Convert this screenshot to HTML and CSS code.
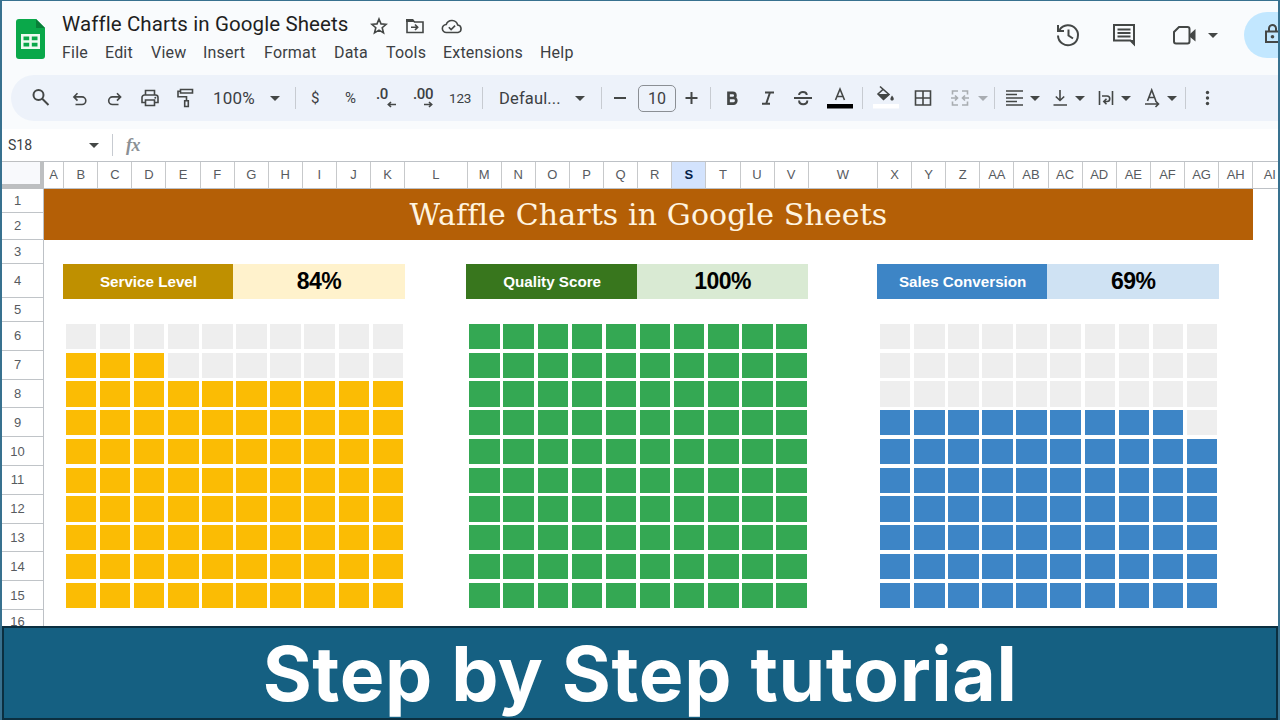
FILE: index.html
```
<!DOCTYPE html>
<html lang="en">
<head>
  <meta charset="UTF-8">
  <meta name="viewport" content="width=device-width, initial-scale=1">
  <title>Waffle Charts in Google Sheets</title>
  <link rel="stylesheet" href="styles.css">
</head>
<body>
  <div class="app">
    <header class="top">
      <svg class="logo" width="30" height="40" viewBox="0 0 30 40">
        <path fill="#0aa84a" d="M3 0h17l9 9v28a3 3 0 0 1-3 3H3a3 3 0 0 1-3-3V3a3 3 0 0 1 3-3z"/>
        <path fill="#087f38" d="M20 0l9 9h-9z"/>
        <path fill="#effaf2" fill-rule="evenodd" d="M5 15h19v15H5zM7.500 17.500v3.700h5.700v-3.700zM15.800 17.500v3.700h5.700v-3.700zM7.500 23.700v3.700h5.700v-3.700zM15.800 23.700v3.700h5.700v-3.700z"/>
      </svg>
      <div class="heading">
        <div class="doc">
          <span class="doc-name">Waffle Charts in Google Sheets</span>
          <svg width="18" height="18" viewBox="0 0 18 18"><path class="line" d="M9 2l2 4.900 5.200.4-4 3.400 1.300 5.200L9 13.100l-4.500 2.800 1.300-5.200-4-3.400L7 6.900z"/></svg>
          <svg width="20" height="18" viewBox="0 0 20 18"><path class="line" d="M2 3h5.500l2 2H18v10.500H2z"/><path d="M1 2h7l2 3H1z"/><path class="line" d="M6 10.200h6.500M10 7.500l2.700 2.700L10 13"/></svg>
          <svg width="22" height="18" viewBox="0 0 22 18"><path class="line" d="M5.500 15.500a4 4 0 0 1-.3-8A6 6 0 0 1 16.700 8a3.800 3.800 0 0 1 .3 7.500zM7.800 10.300l2.300 2.300 4-4"/></svg>
        </div>
        <nav class="menu">
          <span>File</span><span>Edit</span><span>View</span><span>Insert</span><span>Format</span><span>Data</span><span>Tools</span><span>Extensions</span><span>Help</span>
        </nav>
      </div>
      <div class="actions">
        <svg width="26" height="26" viewBox="0 0 26 26"><path class="line thick" d="M4.500 8A10 10 0 1 1 3 13.500M3 3v6h6M13.500 7.500v6l4.500 3"/></svg>
        <svg width="26" height="26" viewBox="0 0 26 26"><path class="line thick" d="M3 3h20v19l-3.500-3.500H3z"/><path d="M19 18h5v6z"/><path class="line thick" d="M6.500 7.500h13M6.500 11h13M6.500 14.500h13"/></svg>
        <svg width="26" height="26" viewBox="0 0 26 26"><path class="line thick" d="M7 5h8.500a2 2 0 0 1 2 2v12.500a2 2 0 0 1-2 2H4a2 2 0 0 1-2-2V10z"/><path d="M18 12l5.500-5v12.500L18 15z"/></svg>
        <i class="caret"></i>
      </div>
      <div class="share">
        <svg width="16" height="22" viewBox="0 0 16 22"><path class="line thick" d="M2 8.500h13v10.500H2zM5 8.500V5.500a3.500 3.500 0 0 1 7 0v3"/><circle cx="8.500" cy="13.700" r="1.800"/></svg>
      </div>
    </header>

    <div class="toolbar">
      <svg width="20" height="20" viewBox="0 0 20 20"><circle class="line thick" cx="7.500" cy="7" r="5"/><path class="line thick" d="M11 10.500l6.500 6.500"/></svg>
      <svg width="20" height="20" viewBox="0 0 20 20"><path class="line" d="M5.500 16.500h6.500a3.800 3.800 0 0 0 0-7.600H4M7.500 5.200L3.900 8.900l3.600 3.700"/></svg>
      <svg width="20" height="20" viewBox="0 0 20 20"><path class="line" d="M14.500 16.500H8.500a3.800 3.800 0 0 1 0-7.600H16.500M13 5.200l3.600 3.700-3.600 3.700"/></svg>
      <svg width="20" height="20" viewBox="0 0 20 20"><path class="line" d="M5.500 7V2.500h9V7M5 14.500H2V9.500A2.500 2.500 0 0 1 4.500 7h11A2.500 2.500 0 0 1 18 9.500v5h-3M5.500 12h9v5.500h-9z"/><circle cx="15.300" cy="9.800" r="1"/></svg>
      <svg width="20" height="20" viewBox="0 0 20 20"><path class="line" d="M5.500 1.500h12v3.500H5.500zM5.500 3.200H3v5.600h8.500v4M9.700 12.800h3.600v5.700H9.700z"/></svg>
      <span class="t-zoom">100%</span>
      <i class="caret"></i>
      <i class="sep"></i>
      <span class="t-sym">$</span>
      <span class="t-sym">%</span>
      <span class="t-dec">.0<svg width="9" height="7" viewBox="0 0 9 7"><path class="line" d="M9 3.500H1.500M4 1L1.300 3.500 4 6"/></svg></span>
      <span class="t-dec">.00<svg width="9" height="7" viewBox="0 0 9 7"><path class="line" d="M0 3.500h7.500M5 1l2.700 2.500L5 6"/></svg></span>
      <span class="t-num">123</span>
      <i class="sep"></i>
      <span class="t-font">Defaul...</span>
      <i class="caret"></i>
      <i class="sep"></i>
      <svg width="20" height="20" viewBox="0 0 20 20"><path class="line thick" d="M4 10h12"/></svg>
      <span class="size">10</span>
      <svg width="20" height="20" viewBox="0 0 20 20"><path class="line thick" d="M4.500 10h12M10.500 4v12"/></svg>
      <i class="sep"></i>
      <svg width="20" height="20" viewBox="0 0 20 20"><path class="line heavy" d="M6.500 4.800h4.300a2.600 2.600 0 0 1 0 5.200H6.500zM6.500 10h5a2.800 2.800 0 0 1 0 5.600h-5z"/></svg>
      <svg width="20" height="20" viewBox="0 0 20 20"><path class="line thick" d="M7 4.500h9M4 15.700h8M12 4.500L8.200 15.700"/></svg>
      <svg width="20" height="20" viewBox="0 0 20 20"><path class="line thick" d="M1 10h18M13.700 7c0-4-7.600-4-7.600 0M6.100 12.500c0 5 8.200 5 8.200 0"/></svg>
      <svg width="26" height="24" viewBox="0 0 26 24"><path class="line" d="M8.500 14L13 3l4.500 11M10 10.500h6"/><path fill="#000" d="M0 18h26v4.500H0z"/></svg>
      <i class="sep"></i>
      <svg width="26" height="26" viewBox="0 0 26 26"><path class="line" d="M7 1.500l9 8-5.500 5L5 9l5.500-5"/><path d="M5 9h11.500l-6 6z"/><path d="M19 10.500c3 3.600 1.700 5 0 5s-2.500-1.500 0-5z"/><path fill="#fff" d="M0 19h26v4.500H0z"/></svg>
      <svg width="20" height="20" viewBox="0 0 20 20"><path class="line" d="M2.500 3h15v14h-15zM10 3v14M2.500 10h15"/></svg>
      <svg class="dim" width="20" height="20" viewBox="0 0 20 20"><path class="line" d="M8 3H2.500v3.500M12 3h5.500v3.500M8 17H2.500v-3.500M12 17h5.500v-3.500M1 10h6.500M19 10h-6.500M5 7.500L7.500 10 5 12.500M15 7.500L12.500 10l2.500 2.500"/></svg>
      <i class="caret dim"></i>
      <i class="sep"></i>
      <svg width="20" height="20" viewBox="0 0 20 20"><path class="line" d="M1 3h17M1 6.500h11M1 10h17M1 13.500h11M1 17h17"/></svg>
      <i class="caret"></i>
      <svg width="20" height="20" viewBox="0 0 20 20"><path class="line" d="M10 2v10M5.800 8.500l4.200 4 4.200-4M3.500 17h13.500"/></svg>
      <i class="caret"></i>
      <svg width="20" height="20" viewBox="0 0 20 20"><path class="line" d="M3.500 3v14M16.500 3v14M6 8h5a2.500 2.500 0 0 1 0 5.500H8M10.500 10.800L7.800 13.500l2.700 2.700"/></svg>
      <i class="caret"></i>
      <svg width="20" height="20" viewBox="0 0 20 20"><path class="line" d="M4.500 13L8.700 2l4.200 11M6 9.500h5.500M2 16h13M12.500 13l3 3-3 3"/></svg>
      <i class="caret"></i>
      <i class="sep"></i>
      <svg width="20" height="20" viewBox="0 0 20 20"><circle cx="10.500" cy="4.500" r="1.700"/><circle cx="10.500" cy="10" r="1.700"/><circle cx="10.500" cy="15.500" r="1.700"/></svg>
    </div>

    <div class="formula">
      <span class="cell-name">S18</span>
      <i class="caret"></i>
      <i class="sep"></i>
      <span class="fx">fx</span>
    </div>

    <div class="sheet">
      <div class="corner"></div>
      <div class="cols" id="cols"></div>
      <div class="rows" id="rows"></div>
      <main class="cells">
        <h1>Waffle Charts in Google Sheets</h1>
        <div class="charts" id="charts"></div>
      </main>
    </div>

    <footer class="banner">Step by Step tutorial</footer>
  </div>

  <script>
    const charts = [
      { name: 'Service Level', value: 84, squares: 83, theme: 'gold' },
      { name: 'Quality Score', value: 100, squares: 100, theme: 'green' },
      { name: 'Sales Conversion', value: 69, squares: 69, theme: 'blue' }
    ];

    // Column letters A..AI
    const cols = document.getElementById('cols');
    for (let i = 0; i < 35; i++) {
      const col = document.createElement('span');
      col.textContent = (i > 25 ? 'A' : '') + String.fromCharCode(65 + i % 26);
      if (col.textContent === 'S') col.className = 'selected';
      cols.appendChild(col);
    }

    // Row numbers
    const rows = document.getElementById('rows');
    for (let i = 1; i <= 16; i++) {
      const row = document.createElement('span');
      row.textContent = i;
      rows.appendChild(row);
    }

    // Each chart is 100 squares, filled from the bottom row up
    charts.forEach(c => {
      const chart = document.createElement('section');
      chart.className = 'chart ' + c.theme;
      let squares = '';
      for (let r = 9; r >= 0; r--) {
        for (let i = 1; i <= 10; i++) {
          squares += r * 10 + i <= c.squares ? '<i class="on"></i>' : '<i></i>';
        }
      }
      chart.innerHTML = `<div class="label"><b>${c.name}</b><strong>${c.value}%</strong></div><div class="waffle">${squares}</div>`;
      document.getElementById('charts').appendChild(chart);
    });
  </script>
</body>
</html>
```
FILE: styles.css
```
* {
  box-sizing: border-box;
}
body {
  margin: 0;
  font-family: Roboto, sans-serif;
  color: #3c4043;
}
.app {
  width: 1280px;
  height: 720px;
  display: flex;
  flex-direction: column;
  overflow: hidden;
  border: solid #38718f;
  border-width: 1px 2px 0;
  background: #f9fbfd;
}
svg {
  display: block;
  fill: #444746;
  flex: none;
}
.line {
  fill: none;
  stroke: #444746;
  stroke-width: 1.6;
}
.thick {
  stroke-width: 2;
}
.heavy {
  stroke-width: 2.7;
}
.caret {
  width: 10px;
  border: 5px solid transparent;
  border-top-color: #444746;
  border-bottom: 0;
}
.sep {
  width: 1px;
  height: 22px;
  background: #c7cbd1;
}

/* Title bar */
.top {
  height: 74px;
  flex: none;
  display: flex;
  padding-left: 14px;
}
.logo {
  margin-top: 18px;
}
.heading {
  width: 1009px;
  padding: 9px 0 0 16px;
}
.doc {
  height: 28px;
  display: flex;
  align-items: center;
}
.doc-name {
  width: 308px;
  font-size: 20.5px;
  letter-spacing: 0.1px;
  color: #1f1f1f;
  white-space: nowrap;
}
.doc svg {
  margin: 4px 17px 0 0;
}
.doc svg:nth-child(3) {
  margin-right: 16px;
}
.menu {
  display: grid;
  grid-template-columns: 43px 46px 52px 61px 70px 52px 57px 97px 40px;
  margin-top: 5px;
  font-size: 16px;
  line-height: 20px;
  letter-spacing: 0.2px;
}
.actions {
  width: 189px;
  display: flex;
  align-items: flex-start;
  padding-top: 21px;
}
.actions svg {
  margin-right: 30px;
}
.actions svg:nth-child(2) {
  margin-right: 35px;
}
.actions svg:nth-child(3) {
  margin-right: 10px;
}
.actions .caret {
  margin-top: 11px;
}
.share {
  width: 34px;
  height: 46px;
  margin-top: 11px;
  padding: 11px 0 0 20px;
  border-radius: 23px 0 0 23px;
  background: #c2e7ff;
  overflow: hidden;
}

/* Toolbar */
.toolbar {
  height: 46px;
  flex: none;
  margin-left: 9px;
  padding-left: 20px;
  border-radius: 23px 0 0 23px;
  background: #edf2fa;
  display: grid;
  grid-template-columns: 39px 34px 36px 35px 38px 57px 25px 16px 34px 31px 37px 36px 33px 17px 76px 26px 9px 28px 43px 29px 12px 36px 35px 34px 35px 11px 40px 37px 28px 16px 11px 25px 20px 25px 21px 25px 22px 24px 18px 12px 20px;
  align-items: center;
  justify-items: start;
}
.dim {
  opacity: 0.4;
}
.t-zoom {
  font-size: 17px;
  letter-spacing: 0.2px;
}
.t-font {
  font-size: 16.5px;
  letter-spacing: 0.15px;
}
.t-sym {
  font-size: 15px;
}
.t-num {
  font-size: 13.5px;
  letter-spacing: -0.2px;
}
.t-dec {
  font-size: 15px;
  font-weight: 500;
  line-height: 13px;
  letter-spacing: -0.4px;
}
.t-dec svg {
  margin: 0 0 0 11px;
}
.size {
  width: 38px;
  height: 27px;
  border: 1px solid #8b8f94;
  border-radius: 5px;
  font-size: 16px;
  line-height: 25px;
  text-align: center;
}

/* Formula bar */
.formula {
  height: 32px;
  flex: none;
  margin-top: 8px;
  background: #fff;
  display: grid;
  grid-template-columns: 81px 23px 13px 1fr;
  align-items: center;
  padding-left: 6px;
}
.cell-name {
  font-size: 14px;
}
.fx {
  padding-left: 1px;
  font: italic bold 18px "Liberation Serif", serif;
  letter-spacing: -0.5px;
  color: #8b9095;
}

/* Sheet */
.sheet {
  height: 465px;
  flex: none;
  display: grid;
  grid-template: 28px 437px / 42px 1234px;
  background: #fff;
  overflow: hidden;
  font-family: "Liberation Sans", sans-serif;
}
.corner {
  border: solid #bdbfc1;
  border-width: 1px 4px 5px 0;
  background: #f8f9fc;
}
.cols {
  display: grid;
  grid-template-columns: 20.2px repeat(10, 34.1px) 62.5px repeat(10, 34.12px) 69.2px repeat(11, 34.13px) 34px;
  border: solid #bdc1c6;
  border-width: 1px 0;
  overflow: hidden;
}
.cols span {
  border-right: 1px solid #c7c9cb;
  font-size: 13px;
  line-height: 26px;
  text-align: center;
  color: #575b5f;
}
.cols .selected {
  background: #d3e3fd;
  font-weight: bold;
  color: #041e49;
}
.rows {
  display: grid;
  grid-template-rows: 23.5px 27.5px 24px 34px 24px repeat(10, 28.8px) 24px;
  border-right: 1px solid #bdc1c6;
}
.rows span {
  display: flex;
  align-items: center;
  justify-content: center;
  padding-right: 10px;
  border-bottom: 1px solid #c0c4c8;
  font-size: 13px;
  color: #575b5f;
}
.cells h1 {
  width: 1209px;
  height: 51px;
  margin: 0 0 24px;
  background: #b45f06;
  color: #fff4e0;
  font: 30px/51px "DejaVu Serif", serif;
  letter-spacing: 0.12px;
  text-align: center;
}
.charts {
  display: grid;
  grid-template-columns: 342px 342px 342px;
  column-gap: 61.6px;
  padding-left: 18.8px;
}
.chart:last-child {
  margin-left: 7px;
  margin-right: -7px;
}
.label {
  display: grid;
  grid-template-columns: 170.4px 171.6px;
  height: 34px;
  line-height: 35px;
  text-align: center;
}
.label b {
  padding-left: 1px;
  color: #fff;
  font-size: 15.2px;
  background: var(--dark);
}
.label strong {
  color: #000;
  font-size: 23px;
  letter-spacing: -0.5px;
  background: var(--light);
}
.waffle {
  display: grid;
  grid-template: repeat(10, 25.2px) / repeat(10, 30.5px);
  gap: 3.6px;
  margin: 25.8px 0 0 3px;
}
.waffle i {
  background: #eee;
}
.waffle .on {
  background: var(--fill);
}
.gold {
  --dark: #bf9000;
  --light: #fff2cc;
  --fill: #fbbc04;
}
.green {
  --dark: #38761d;
  --light: #d9ead3;
  --fill: #34a853;
}
.blue {
  --dark: #3d85c6;
  --light: #cfe2f3;
  --fill: #3d85c6;
}

.banner {
  height: 94px;
  flex: none;
  border: 2px solid #0b2f40;
  background: #156082;
  color: #fff;
  font-family: Inter, sans-serif;
  font-size: 75px;
  font-weight: bold;
  line-height: 91px;
  letter-spacing: 0.6px;
  text-align: center;
}
```
